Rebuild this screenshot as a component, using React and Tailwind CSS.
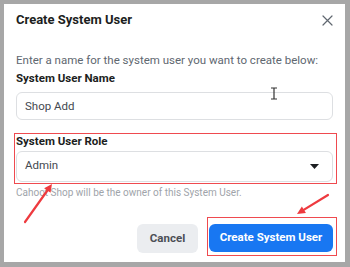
import { useState } from "react";

function Arrow({ x1, y1, x2, y2 }) {
  const a = Math.atan2(y2 - y1, x2 - x1);
  const len = 9;
  const spread = 0.45;
  const p1 = [x2 - len * Math.cos(a - spread), y2 - len * Math.sin(a - spread)];
  const p2 = [x2 - len * Math.cos(a + spread), y2 - len * Math.sin(a + spread)];
  return (
    <g>
      <line x1={x1} y1={y1} x2={x2 - 4 * Math.cos(a)} y2={y2 - 4 * Math.sin(a)} stroke="#ee3a3f" strokeWidth="2.2" strokeLinecap="round" />
      <polygon points={`${x2},${y2} ${p1[0]},${p1[1]} ${p2[0]},${p2[1]}`} fill="#ee3a3f" />
    </g>
  );
}

export default function App() {
  const [name, setName] = useState("Shop Add");

  return (
    <div className="w-[350px] h-[267px] bg-[#a7a7a7] pl-[4px] pt-[4px] pr-[5px] pb-[5px] font-['Roboto',sans-serif]">
      <div className="relative h-full bg-white">
        {/* header */}
        <div className="flex items-center justify-between h-[26px] pl-[12px] pr-[12px] pt-[6px]">
          <h1 className="text-[13px] leading-[20px] font-bold text-[#1c1e21]">Create System User</h1>
          <svg width="11" height="11" viewBox="0 0 11 11">
            <path d="M1 1 L10 10 M10 1 L1 10" stroke="#606770" strokeWidth="1.2" strokeLinecap="round" />
          </svg>
        </div>

        <div className="px-[12px] pt-[22px]">
          <p className="text-[11.5px] leading-[16px] text-[#606770] whitespace-nowrap">
            Enter a name for the system user you want to create below:
          </p>
          <p className="mt-[2px] text-[11.5px] leading-[16px] font-bold text-[#1c1e21]">System User Name</p>
          <input
            value={name}
            onChange={(e) => setName(e.target.value)}
            className="mt-[6px] w-[317px] h-[28px] rounded-[6px] border border-[#dddfe2] px-[8px] text-[11.5px] text-[#444950] outline-none"
          />
        </div>

        {/* role, boxed */}
        <div className="mt-[13px] ml-[10px] w-[323px] h-[51px] border-[1.5px] border-[#ef4a4f] pl-[1px]">
          <p className="text-[11.5px] leading-[14px] font-bold text-[#1c1e21]">System User Role</p>
          <div className="mt-[2.5px] w-[317px] h-[31px] rounded-[6px] border border-[#dddfe2] flex items-center justify-between pl-[8px] pr-[13px]">
            <span className="text-[11.5px] text-[#444950]">Admin</span>
            <svg width="9" height="5" viewBox="0 0 9 5">
              <path d="M0 0 L9 0 L4.5 5 Z" fill="#1c1e21" />
            </svg>
          </div>
        </div>

        <p className="px-[12px] mt-[2px] text-[10px] leading-[14px] text-[#a0a4aa]">
          Cahoot Shop will be the owner of this System User.
        </p>

        <div className="flex justify-end items-start mt-[17px] pr-[8px]">
          <button className="mt-[7px] w-[61px] h-[29px] rounded-[6px] bg-[#ebedf0] text-[11.5px] font-bold text-[#4b4f56]">
            Cancel
          </button>
          <div className="ml-[9px] border-[1.5px] border-[#ef4a4f] pt-[5.5px] pl-[1px] pr-[3px] pb-[3px]">
            <button className="w-[124px] h-[28px] rounded-[6px] bg-[#1877f2] text-[11.5px] font-bold text-white">
              Create System User
            </button>
          </div>
        </div>

        {/* cursor */}
        <svg className="absolute left-[266px] top-[83px]" width="8" height="13" viewBox="0 0 8 13">
          <path d="M1 1 H7 M4 1 V12 M1 12 H7" stroke="#333" strokeWidth="1.2" fill="none" />
        </svg>

        {/* annotation arrows */}
        <svg className="absolute left-0 top-0 pointer-events-none" width="341" height="258" viewBox="0 0 341 258">
          <Arrow x1={21} y1={218} x2={48} y2={180} />
          <Arrow x1={324} y1={191} x2={293} y2={210} />
        </svg>
      </div>
    </div>
  );
}
